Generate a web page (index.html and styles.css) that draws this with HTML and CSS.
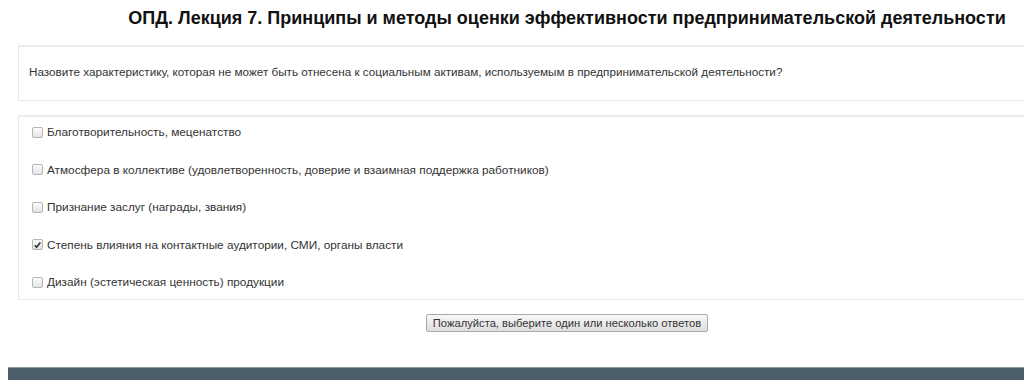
FILE: index.html
```html
<!DOCTYPE html>
<html lang="ru">
<head>
  <meta charset="UTF-8">
  <meta name="viewport" content="width=device-width, initial-scale=1.0">
  <title>ОПД. Лекция 7</title>
  <link rel="stylesheet" href="styles.css">
</head>
<body>
  <div class="page">
    <h1>ОПД. Лекция 7. Принципы и методы оценки эффективности предпринимательской деятельности</h1>

    <div class="question">
      Назовите характеристику, которая не может быть отнесена к социальным активам, используемым в предпринимательской деятельности?
    </div>

    <div class="answers">
      <label class="answer"><span class="box"></span>Благотворительность, меценатство</label>
      <label class="answer"><span class="box"></span>Атмосфера в коллективе (удовлетворенность, доверие и взаимная поддержка работников)</label>
      <label class="answer"><span class="box"></span>Признание заслуг (награды, звания)</label>
      <label class="answer"><span class="box checked"><svg viewBox="0 0 10 10" width="10" height="10"><path d="M2 5.2 L4 7.4 L8.2 2.3" fill="none" stroke="#333" stroke-width="1.8"/></svg></span>Степень влияния на контактные аудитории, СМИ, органы власти</label>
      <label class="answer"><span class="box"></span>Дизайн (эстетическая ценность) продукции</label>
    </div>

    <div class="actions">
      <button class="submit">Пожалуйста, выберите один или несколько ответов</button>
    </div>
  </div>

  <footer></footer>
</body>
</html>
```

FILE: styles.css
```css
html, body {
  overflow: hidden;
}

body {
  margin: 0 0 0 8px;
  font-family: "Liberation Sans", Arial, sans-serif;
  color: #333;
  background: #fff;
}

.page {
  padding-left: 10px;
}

h1 {
  margin: 0;
  padding: 8px 0 0 92px;
  font-size: 18px;
  line-height: 20px;
  font-weight: bold;
  color: #111;
  text-align: center;
  white-space: nowrap;
}

.question {
  margin-top: 17px;
  padding: 18px 10px 21px;
  font-size: 11.7px;
  line-height: 14px;
  border: 1px solid #e6e6e6;
  border-top: 2px solid #ececec;
  border-right: none;
  white-space: nowrap;
}

.answers {
  margin-top: 14px;
  padding: 8px 13px 10px;
  display: flex;
  flex-direction: column;
  gap: 23.5px;
  border: 1px solid #e6e6e6;
  border-top: 2px solid #ececec;
  border-right: none;
}

.answer {
  display: flex;
  align-items: center;
  gap: 4px;
  font-size: 11.8px;
  line-height: 14px;
  color: #333;
}

.box {
  width: 9px;
  height: 9px;
  border: 1px solid #b5b5b5;
  border-radius: 2px;
  background: linear-gradient(#fcfcfc, #e4e4e4);
  display: flex;
  align-items: center;
  justify-content: center;
}

.box svg {
  display: block;
}

.actions {
  margin-top: 14px;
  padding-left: 92px;
  display: flex;
  justify-content: center;
}

.submit {
  font-family: "Liberation Sans", Arial, sans-serif;
  font-size: 11.2px;
  line-height: 14px;
  padding: 1px 6px;
  color: #333;
  border: 1px solid #a9a9a9;
  border-radius: 2px;
  background: linear-gradient(#f8f8f8, #dedede);
}

footer {
  margin-top: 35px;
  height: 12px;
  background: #4b5e69;
  border-top: 1px solid #8d9ba3;
}
```
